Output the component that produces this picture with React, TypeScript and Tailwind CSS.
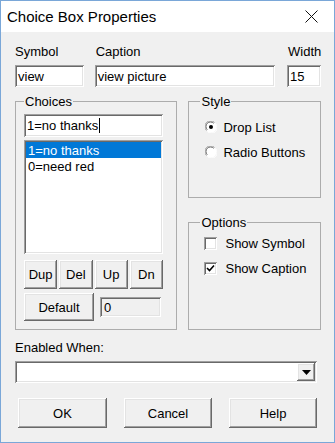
import React from "react";

const raised =
  "bg-[#f0f0f0] shadow-[inset_-1px_-1px_#696969,inset_1px_1px_#ffffff,inset_-2px_-2px_#a0a0a0,inset_2px_2px_#e3e3e3]";
const sunken =
  "shadow-[inset_1px_1px_#a0a0a0,inset_-1px_-1px_#ffffff,inset_2px_2px_#696969,inset_-2px_-2px_#e3e3e3]";

const Button = ({ label, className = "" }: { label: string; className?: string }) => (
  <div className={`${raised} flex items-center justify-center text-[13px] text-black ${className}`}>{label}</div>
);

const Field = ({ value, className = "", cursor = false }: { value: string; className?: string; cursor?: boolean }) => (
  <div className={`${sunken} bg-white flex items-center pl-[3px] text-[13px] ${className}`}>
    <span>{value}</span>
    {cursor && <span className="ml-[1px] w-[1px] h-[15px] bg-black" />}
  </div>
);

const Radio = ({ checked }: { checked?: boolean }) => (
  <svg width="12" height="12" viewBox="0 0 12 12">
    <circle cx="6" cy="6" r="5.5" fill="#ffffff" />
    <path d="M1.5 9.5 A5 5 0 0 1 9.5 1.5" fill="none" stroke="#a0a0a0" strokeWidth="1" />
    <path d="M2.3 8.7 A4 4 0 0 1 8.7 2.3" fill="none" stroke="#696969" strokeWidth="1" />
    <path d="M10.5 2.5 A5 5 0 0 1 2.5 10.5" fill="none" stroke="#ffffff" strokeWidth="1" />
    {checked && <circle cx="6" cy="6" r="2" fill="#000000" />}
  </svg>
);

const Check = ({ checked }: { checked?: boolean }) => (
  <div className={`${sunken} w-[13px] h-[13px] bg-white flex items-center justify-center`}>
    {checked && (
      <svg width="9" height="9" viewBox="0 0 9 9">
        <path d="M1 4 L3.5 6.5 L8 1.5" fill="none" stroke="#000" strokeWidth="1.6" />
      </svg>
    )}
  </div>
);

const Legend = ({ children }: { children: React.ReactNode }) => (
  <legend className="px-[1px] text-[13px] leading-[15px]">{children}</legend>
);

export default function App() {
  return (
    <div className="w-[335px] h-[443px] border border-[#7aa7d8] bg-[#f0f0f0] flex flex-col font-['Liberation_Sans',Arial,sans-serif] text-black text-[13px] leading-[15px]">
      <div className="h-[31px] bg-white flex items-center justify-between pl-[6px] pr-[16px]">
        <span className="text-[15px]">Choice Box Properties</span>
        <svg width="13" height="13" viewBox="0 0 13 13">
          <path d="M0.5 0.5 L12.5 12.5 M12.5 0.5 L0.5 12.5" stroke="#111" strokeWidth="1" />
        </svg>
      </div>

      <div className="flex flex-col pl-[14px] pr-[13px] pt-[12px]">
        <div className="flex gap-[11px]">
          <div className="flex flex-col w-[69px] gap-[6px]">
            <span>Symbol</span>
            <Field value="view" className="h-[22px]" />
          </div>
          <div className="flex flex-col w-[181px] gap-[6px]">
            <span className="pl-[1px]">Caption</span>
            <Field value="view picture" className="h-[22px]" />
          </div>
          <div className="flex flex-col w-[34px] gap-[6px] ml-[1px]">
            <span className="pl-[1px]">Width</span>
            <Field value="15" className="h-[22px]" />
          </div>
        </div>

        <div className="flex gap-[11px] mt-[7px] h-[236px]">
          <fieldset className="w-[163px] h-[236px] border border-[#acacac] pl-[8px] flex flex-col">
            <Legend>Choices</Legend>
            <Field value="1=no thanks" cursor className="w-[139px] h-[23px] mt-[5px]" />
            <div className={`${sunken} bg-white w-[139px] h-[114px] mt-[3px] p-[2px] flex flex-col`}>
              <div className="bg-[#0078d7] text-white h-[16px] flex items-center pl-[2px]">1=no thanks</div>
              <div className="h-[16px] flex items-center pl-[2px]">0=need red</div>
            </div>
            <div className="grid grid-cols-4 gap-[2px] w-[139px] mt-[6px]">
              <Button label="Dup" className="h-[29px]" />
              <Button label="Del" className="h-[29px]" />
              <Button label="Up" className="h-[29px]" />
              <Button label="Dn" className="h-[29px]" />
            </div>
            <div className="flex items-center mt-[4px]">
              <Button label="Default" className="w-[70px] h-[28px]" />
              <div className={`${sunken} bg-[#f0f0f0] w-[61px] h-[20px] ml-[6px] flex items-center pl-[4px]`}>0</div>
            </div>
          </fieldset>

          <div className="flex flex-col w-[133px]">
            <fieldset className="h-[104px] border border-[#acacac] pl-[11px] flex flex-col">
              <Legend>Style</Legend>
              <div className="flex flex-col gap-[5px] mt-[8px] ml-[5px]">
                <div className="h-[20px] flex items-center gap-[6px]">
                  <Radio checked />
                  <span>Drop List</span>
                </div>
                <div className="h-[20px] flex items-center gap-[6px]">
                  <Radio />
                  <span>Radio Buttons</span>
                </div>
              </div>
            </fieldset>
            <fieldset className="flex-1 mt-[17px] border border-[#acacac] pl-[11px] flex flex-col">
              <Legend>Options</Legend>
              <div className="flex flex-col gap-[5px] mt-[3px] ml-[4px]">
                <div className="h-[20px] flex items-center gap-[8px]">
                  <Check />
                  <span>Show Symbol</span>
                </div>
                <div className="h-[20px] flex items-center gap-[8px]">
                  <Check checked />
                  <span>Show Caption</span>
                </div>
              </div>
            </fieldset>
          </div>
        </div>

        <span className="mt-[10px]">Enabled When:</span>
        <div className={`${sunken} bg-white w-[302px] h-[22px] mt-[6px] flex justify-end items-center pr-[2px]`}>
          <div className={`${raised} w-[18px] h-[18px] flex items-center justify-center`}>
            <svg width="9" height="5" viewBox="0 0 9 5">
              <path d="M0 0 H9 L4.5 5 Z" fill="#000" />
            </svg>
          </div>
        </div>

        <div className="flex gap-[17px] mt-[15px] pl-[3px]">
          <Button label="OK" className="w-[89px] h-[30px]" />
          <Button label="Cancel" className="w-[88px] h-[30px]" />
          <Button label="Help" className="w-[88px] h-[30px]" />
        </div>
      </div>
    </div>
  );
}
